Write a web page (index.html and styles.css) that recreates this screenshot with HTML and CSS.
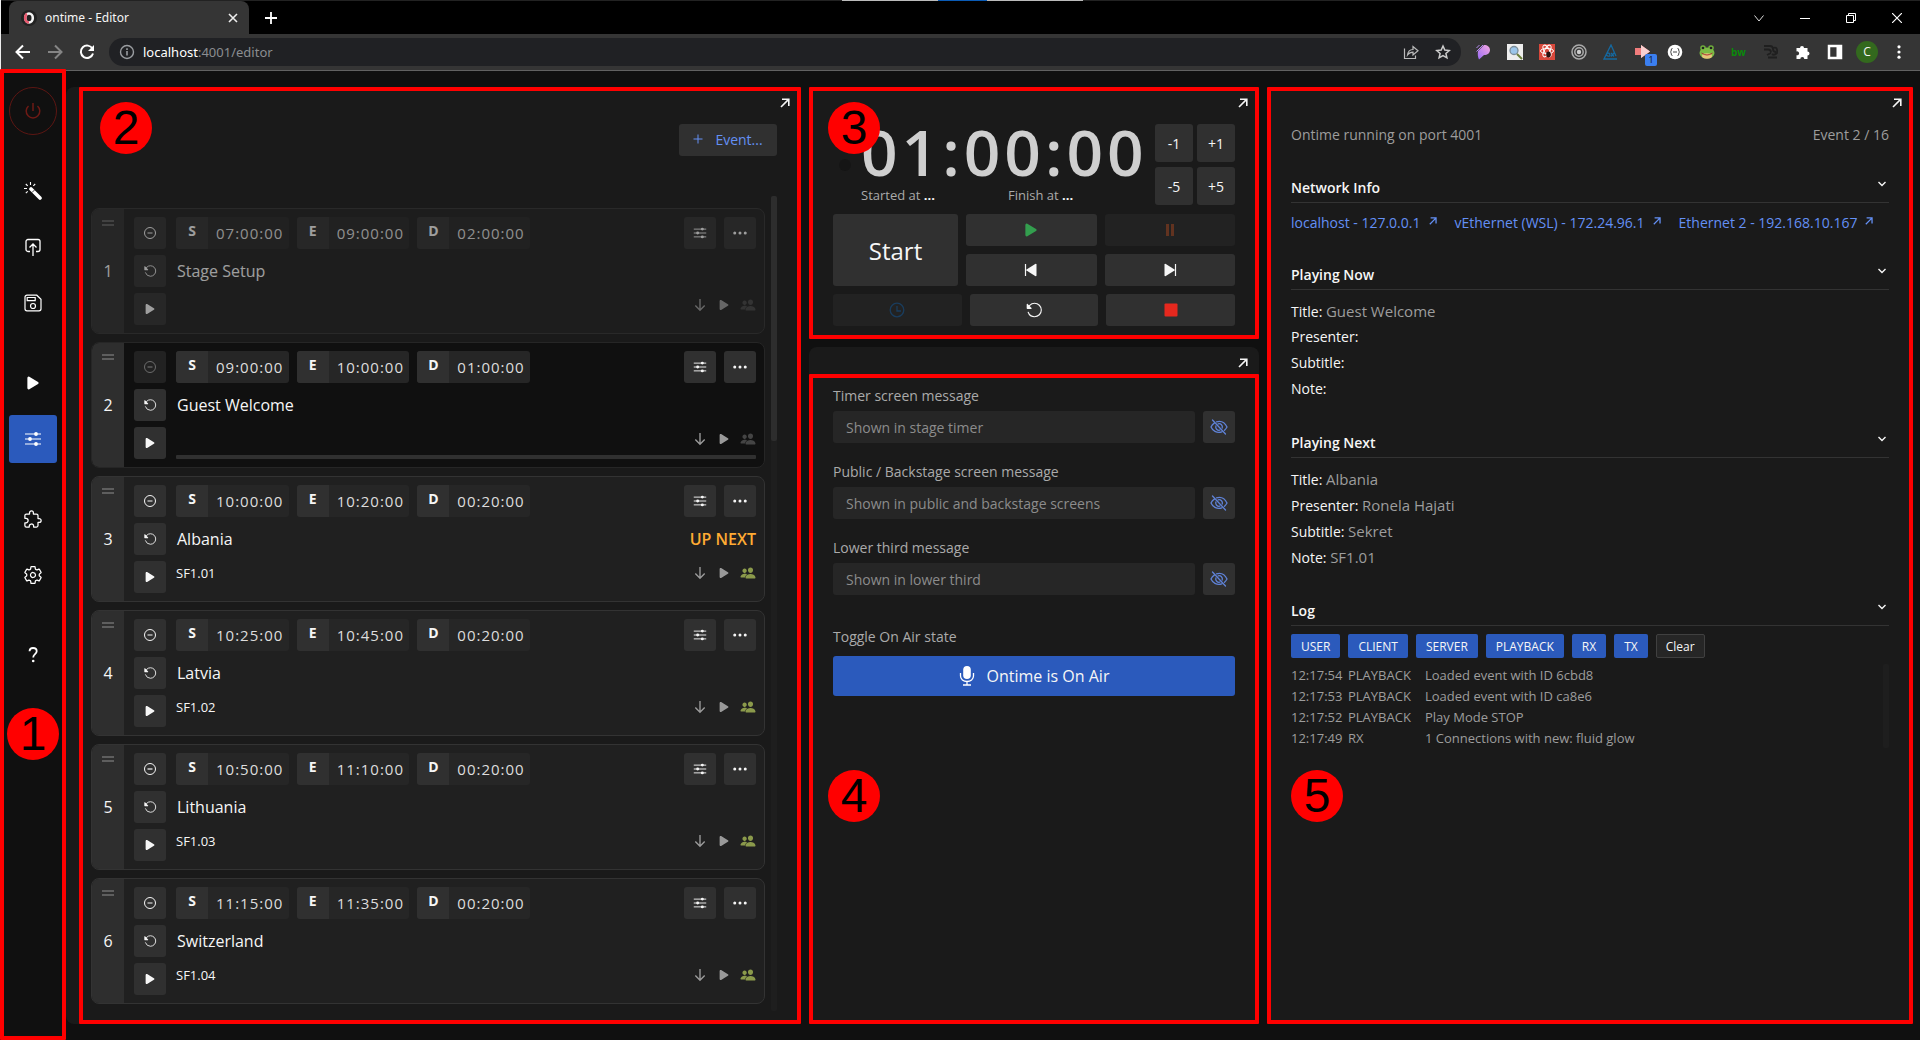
FILE: index.html
```html
<!DOCTYPE html>
<html lang="en">
<head>
<meta charset="utf-8">
<meta name="viewport" content="width=device-width, initial-scale=1">
<title>ontime - Editor</title>
<link rel="stylesheet" href="styles.css">
</head>
<body>
<svg class="sprite" aria-hidden="true">
  <symbol id="play" viewBox="0 0 512 512"><path fill="currentColor" d="M133 440a35.37 35.37 0 01-17.5-4.67c-12-6.8-19.46-20-19.46-34.33V111c0-14.37 7.46-27.53 19.46-34.33a35.13 35.13 0 0135.77.45l247.85 148.36a36 36 0 010 61l-247.89 148.4A35.5 35.5 0 01133 440z"/></symbol>
  <symbol id="reload" viewBox="0 0 512 512"><g transform="matrix(-1 0 0 1 512 0)"><path fill="none" stroke="currentColor" stroke-width="32" stroke-linecap="round" d="M400 148l-21.12-24.57A191.43 191.43 0 00240 64C134 64 48 150 48 256s86 192 192 192a192.09 192.09 0 00181.07-128"/><path fill="currentColor" d="M464 97.42V208a16 16 0 01-16 16H337.42c-14.26 0-21.46-17.23-11.38-27.31L436.69 86.04C446.77 75.96 464 83.16 464 97.42z"/></g></symbol>
  <symbol id="minus" viewBox="0 0 14 14"><circle cx="7" cy="7" r="5.5" fill="none" stroke="currentColor"/><path d="M4.5 7h5" stroke="currentColor" stroke-width="1.2"/></symbol>
  <symbol id="options" viewBox="0 0 18 18"><path d="M1 4h16M1 9h16M1 14h16" stroke="currentColor" stroke-width="1.2"/><g fill="currentColor"><circle cx="12" cy="4" r="1.9"/><circle cx="6" cy="9" r="1.9"/><circle cx="12" cy="14" r="1.9"/></g></symbol>
  <symbol id="dots" viewBox="0 0 12 12"><g fill="currentColor"><circle cx="1.5" cy="6" r="1.3"/><circle cx="6" cy="6" r="1.3"/><circle cx="10.5" cy="6" r="1.3"/></g></symbol>
  <symbol id="down" viewBox="0 0 14 14"><path d="M7 1v11M2.3 7.5L7 12.2l4.700-4.700" fill="none" stroke="currentColor" stroke-width="1.400"/></symbol>
  <symbol id="people" viewBox="0 0 512 512"><path fill="currentColor" d="M336 256c-20.560 0-40.440-9.180-56-25.840-15.130-16.250-24.370-37.920-26-61-1.740-24.620 5.770-47.260 21.140-63.760S312 80 336 80c23.830 0 45.380 9.060 60.700 25.520 15.470 16.620 23 39.220 21.260 63.630-1.670 23.110-10.900 44.770-26 61C376.440 246.820 356.570 256 336 256zM467.830 432H204.180a27.710 27.710 0 01-22-10.670 30.220 30.220 0 01-5.260-25.790c8.420-33.810 29.280-61.850 60.320-81.080C264.790 297.400 299.860 288 336 288c36.850 0 71 9 98.710 26.050 31.110 19.130 52 47.330 60.380 81.550a30.270 30.270 0 01-5.320 25.780A27.680 27.680 0 01467.830 432zM147 260c-35.190 0-66.130-32.720-69-72.930-1.420-20.600 5-39.650 18-53.620 12.860-13.830 31-21.450 51-21.450s38 7.660 50.930 21.570c13.100 14.080 19.500 33.090 18 53.520-2.870 40.200-33.800 72.910-68.930 72.910zM212.660 291.450c-17.590-8.600-40.420-12.900-65.650-12.900-29.460 0-58.070 7.680-80.570 21.620-25.510 15.830-42.670 38.880-49.600 66.710a27.390 27.390 0 004.790 23.360A25.320 25.320 0 0041.720 400h111a8 8 0 007.870-6.570c8.590-34.690 28.760-64.720 58.120-85.700a8 8 0 00-.630-13.390z"/></symbol>
  <symbol id="expand" viewBox="0 0 10 10"><path d="M1 9L8.600 1.400M2 1.200h6.800V8" fill="none" stroke="currentColor" stroke-width="1.600"/></symbol>
  <symbol id="chevron" viewBox="0 0 10 10"><path d="M1.500 3L5 6.500 8.500 3" fill="none" stroke="currentColor" stroke-width="1.400"/></symbol>
  <symbol id="eye-off" viewBox="0 0 18 18"><g fill="none" stroke="currentColor" stroke-width="1.300" stroke-linecap="round"><path d="M2.500 2l13 14M6.500 3.800C12 2.200 15.500 5.800 17 9c-.7 1.300-1.500 2.300-2.500 3.200M11.800 13.900C6.500 15.600 2.500 12.400 1 9c.8-1.700 1.900-3 3.300-3.900M8.200 5.800A3.300 3.300 0 0112.200 10M9.800 12.200A3.300 3.300 0 015.900 8"/></g></symbol>
  <symbol id="prev" viewBox="0 0 14 14"><path d="M1.500 1v12" stroke="currentColor" stroke-width="1.200"/><path fill="currentColor" d="M12.500 1.500v11q-.2 1-1.300.6L2.500 7.600q-.8-.6 0-1.200L11.200.9q1.100-.4 1.300.6z"/></symbol>
</svg>

<header class="browser">
  <div class="tabstrip">
    <div class="tab">
      <svg class="favicon" viewBox="0 0 16 16"><circle cx="8" cy="8" r="8" fill="#222"/><ellipse cx="8" cy="8" rx="3.800" ry="4.500" fill="none" stroke="#f4f4f4" stroke-width="2.600"/><path d="M8 12.500C5.500 12.500 4.200 10.500 4.200 8S5 4.500 6 4" fill="none" stroke="#e8596f" stroke-width="2.600"/></svg>
      <span class="tab-title">ontime - Editor</span>
      <button class="plain" aria-label="Close tab"><svg width="10" height="10" viewBox="0 0 10 10"><path d="M1 1l8 8M9 1L1 9" stroke="#eee" stroke-width="1.600"/></svg></button>
    </div>
    <button class="plain new-tab" aria-label="New tab"><svg width="12" height="12" viewBox="0 0 12 12"><path d="M6 0v12M0 6h12" stroke="#fff" stroke-width="1.800"/></svg></button>
    <div class="drop-hint"></div>
    <div class="window-controls">
      <button class="plain" aria-label="Search tabs"><svg width="10" height="10" viewBox="0 0 10 10"><path d="M.5 2.500L5 8l4.500-5.500" fill="none" stroke="#ddd"/></svg></button>
      <button class="plain" aria-label="Minimize"><svg width="10" height="10" viewBox="0 0 10 10"><path d="M0 5.500h10" stroke="#fff"/></svg></button>
      <button class="plain" aria-label="Restore"><svg width="10" height="10" viewBox="0 0 10 10"><path d="M.5 2.500h7v7h-7zM2.500 2.500v-2h7v7h-2" fill="none" stroke="#fff"/></svg></button>
      <button class="plain" aria-label="Close"><svg width="10" height="10" viewBox="0 0 10 10"><path d="M0 0l10 10M10 0L0 10" stroke="#fff" stroke-width="1.200"/></svg></button>
    </div>
  </div>
  <div class="toolbar">
    <button class="plain nav" aria-label="Back"><svg width="16" height="16" viewBox="0 0 16 16"><path d="M15 8H2M8 1.500L1.500 8 8 14.500" fill="none" stroke="#fff" stroke-width="2"/></svg></button>
    <button class="plain nav" aria-label="Forward"><svg width="16" height="16" viewBox="0 0 16 16"><path d="M1 8h13M8 1.500L14.500 8 8 14.500" fill="none" stroke="#858585" stroke-width="2"/></svg></button>
    <button class="plain nav" aria-label="Reload"><svg width="16" height="16" viewBox="0 0 16 16"><path d="M13.500 4.800A6.200 6.200 0 1014 9.500" fill="none" stroke="#fff" stroke-width="2"/><path d="M15 1v6H9z" fill="#fff"/></svg></button>
    <div class="omnibox">
      <svg width="16" height="16" viewBox="0 0 16 16"><circle cx="8" cy="8" r="6.500" fill="none" stroke="#9a9da1" stroke-width="1.400"/><path d="M8 7v4.500M8 4.300V6" stroke="#9a9da1" stroke-width="1.600"/></svg>
      <span class="url"><span class="host">localhost</span>:4001/editor</span>
      <button class="plain" aria-label="Share"><svg width="16" height="16" viewBox="0 0 16 16"><path d="M1.500 4.500v10h11v-3M4.500 11c.5-4 2.500-5.500 5.500-5.500V2.500l5 4.300-5 4.200V8.200C7.500 8.200 6 9 4.500 11z" fill="none" stroke="#bbb" stroke-width="1.200"/></svg></button>
      <button class="plain" aria-label="Bookmark"><svg width="16" height="16" viewBox="0 0 16 16"><path d="M8 2l1.800 4.100 4.400.4-3.300 2.900 1 4.400L8 11.500l-3.900 2.300 1-4.400L1.800 6.500l4.400-.4z" fill="none" stroke="#ccc" stroke-width="1.500"/></svg></button>
    </div>
    <div class="extensions">
      <svg viewBox="0 0 16 16"><defs><linearGradient id="pg" x1="1" y1="0" x2="0" y2="1"><stop offset="0" stop-color="#f7a8e0"/><stop offset="1" stop-color="#9a6cf5"/></linearGradient></defs><path d="M3 7l6-6c3.500 0 6 2 6 5s-2.500 5-6 5L4 15.500C2.800 13 2.500 10 3 7z" fill="url(#pg)"/><path d="M1.500 4l3-3M1.500 7.500L8 1" stroke="#b58cf0"/></svg>
      <svg viewBox="0 0 16 16"><path fill="#eee" d="M0 0h16v16H0z"/><circle cx="7" cy="6.500" r="4" fill="#9cc6ea" stroke="#7b8d99" stroke-width="1.300"/><path d="M10 10l5 5" stroke="#6a7f3a" stroke-width="2"/></svg>
      <svg viewBox="0 0 16 16"><path fill="#d9483b" d="M0 0h16v16H0z"/><g fill="none" stroke="#fff"><ellipse cx="8" cy="7" rx="6.500" ry="2.600"/><ellipse cx="8" cy="7" rx="6.500" ry="2.600" transform="rotate(60 8 7)"/><ellipse cx="8" cy="7" rx="6.500" ry="2.600" transform="rotate(120 8 7)"/></g><ellipse cx="9.500" cy="10.500" rx="2.300" ry="3" fill="#2a1210"/></svg>
      <svg viewBox="0 0 16 16"><g fill="none" stroke="#aaa" stroke-width="1.500"><circle cx="8" cy="8" r="7"/><circle cx="8" cy="8" r="4.200"/></g><circle cx="8" cy="8" r="2.200" fill="#ccc"/></svg>
      <svg viewBox="0 0 16 16"><path d="M14 15H1L8 1l5 11M5 12c3 1 2-3 0-3s-2 3 0 3M8 9l3 3.500M11 9l-3 3.500" fill="none" stroke="#15689f" stroke-width="1.300"/></svg>
      <span class="ext-badged"><svg viewBox="0 0 16 16"><path d="M0 4h6V1l9 6.500L6 14v-3H0z" fill="#f07c7c"/><path d="M6 1l9 6.500L6 14z" fill="#f8d0d0"/></svg><span class="ext-count">1</span></span>
      <svg viewBox="0 0 16 16"><circle cx="8" cy="8" r="7.300" fill="#fff"/><path d="M5.500 4.500q-1.500 0-1.200 1.500 0 1.500-1 2 1 .5 1 2-.3 1.500 1.200 1.500M10.500 4.500q1.500 0 1.200 1.500 0 1.500 1 2-1 .5-1 2 .3 1.500-1.200 1.500M6 8h4" fill="none" stroke="#444"/></svg>
      <svg viewBox="0 0 16 16"><circle cx="4" cy="4" r="2.800" fill="#6fae3c"/><circle cx="12" cy="4" r="2.800" fill="#6fae3c"/><ellipse cx="8" cy="9" rx="7.500" ry="5.500" fill="#7bbb44"/><ellipse cx="8" cy="12" rx="5" ry="2.800" fill="#e7c57a"/><circle cx="4" cy="4" r="1.300" fill="#222"/><circle cx="12" cy="4" r="1.300" fill="#222"/><path d="M2.500 9q5.500 4 11 0" fill="none" stroke="#a33"/></svg>
      <span class="ext-bw">bw</span>
      <svg viewBox="0 0 16 16"><path d="M1 2h6q3 0 3 3t3 3M1 5.500h4q3 0 3 3M4 11l4-2M5 13.500h9M10 4q5-2 4 5-3 3-5 1" fill="none" stroke="#1f1f1f" stroke-width="1.800"/></svg>
      <svg viewBox="0 0 16 16"><path d="M1.500 4H5a2 2 0 114 0h3.500v3.500a2 2 0 110 4V15H9.300a2 2 0 10-4 0H1.500v-3.800a2 2 0 100-3.800z" fill="#fff"/></svg>
      <svg viewBox="0 0 16 16"><path d="M2 2h12v12H2z" fill="none" stroke="#fff" stroke-width="2.500"/><path d="M9.500 2H14v12H9.500z" fill="#fff"/></svg>
      <span class="avatar">C</span>
      <svg viewBox="0 0 16 16"><g fill="#fff"><circle cx="8" cy="2.800" r="1.600"/><circle cx="8" cy="8" r="1.600"/><circle cx="8" cy="13.200" r="1.600"/></g></svg>
    </div>
  </div>
</header>

<div class="app">
  <nav class="sidebar">
    <div class="frame frame-nav"></div>
    <button class="side-btn power" aria-label="Quit"><svg width="18" height="18" viewBox="0 0 18 18"><path d="M9 1v8M4.500 4A6.800 6.800 0 1013.500 4" fill="none" stroke="currentColor" stroke-width="1.500"/></svg></button>
    <div class="side-group">
      <button class="side-btn" aria-label="Quick start"><svg width="18" height="18" viewBox="0 0 18 18"><path d="M7 7l9 9" stroke="#fff" stroke-width="3.600" stroke-linecap="round"/><path d="M8 10.500L10.500 8" stroke="#111" stroke-width=".8"/><path d="M6.500 0v3M1.800 2l1.900 1.900M0 6.500h3M1.800 11.200l1.900-1.900M11.200 2L9.300 3.900" stroke="#fff" stroke-width="1.100"/></svg></button>
      <button class="side-btn" aria-label="Import"><svg width="18" height="18" viewBox="0 0 18 18"><path d="M6 13.500H4a2 2 0 01-2-2v-8a2 2 0 012-2h10a2 2 0 012 2v8a2 2 0 01-2 2h-2M9 18V6.500M5.500 9.500L9 6l3.500 3.500" fill="none" stroke="#fff" stroke-width="1.300"/></svg></button>
      <button class="side-btn" aria-label="Save"><svg width="18" height="18" viewBox="0 0 18 18"><path d="M12.800 1.200H3a2 2 0 00-2 2v11.600a2 2 0 002 2h12a2 2 0 002-2V5.200zM3.200 3.500h8v3.200h-8z" fill="none" stroke="#fff" stroke-width="1.200"/><circle cx="9" cy="12" r="2.500" fill="none" stroke="#fff" stroke-width="1.200"/></svg></button>
    </div>
    <div class="side-group">
      <button class="side-btn" aria-label="Run mode"><svg width="18" height="18"><use href="#play"/></svg></button>
      <button class="side-btn active" aria-label="Edit mode"><svg width="18" height="18"><use href="#options"/></svg></button>
    </div>
    <div class="side-group">
      <button class="side-btn" aria-label="Integrations"><svg width="20" height="20" viewBox="0 0 512 512"><path fill="none" stroke="#fff" stroke-width="32" d="M413.660 246.100H386a2 2 0 01-2-2v-77.240A38.860 38.860 0 00345.140 128H267.900a2 2 0 01-2-2V98.340c0-27.140-21.500-49.860-48.640-50.330a49.530 49.530 0 00-50.400 49.510V126a2 2 0 01-2 2H87.620A39.740 39.740 0 0048 167.620V238a2 2 0 002 2h26.910c29.370 0 53.680 25.480 54.090 54.850.42 29.870-23.510 57.150-53.290 57.150H50a2 2 0 00-2 2v70.380A39.740 39.740 0 0087.620 464H158a2 2 0 002-2v-20.930c0-30.280 24.750-56.350 55-57.060 30.100-.7 57 20.310 57 50.280V462a2 2 0 002 2h71.140A38.860 38.860 0 00384 425.140v-78a2 2 0 012-2h28.480c27.630 0 49.520-22.670 49.520-50.400s-23.200-48.640-50.340-48.640z"/></svg></button>
      <button class="side-btn" aria-label="Settings"><svg width="20" height="20" viewBox="0 0 512 512"><path fill="none" stroke="#fff" stroke-width="32" stroke-linejoin="round" d="M262.290 192.310a64 64 0 1057.400 57.400 64.130 64.130 0 00-57.400-57.400zM416.390 256a154.340 154.340 0 01-1.530 20.790l45.210 35.460a10.810 10.810 0 012.450 13.750l-42.770 74a10.810 10.810 0 01-13.140 4.590l-44.900-18.080a16.110 16.110 0 00-15.170 1.750A164.480 164.480 0 01325 400.800a15.940 15.940 0 00-8.820 12.140l-6.730 47.890a11.080 11.080 0 01-10.680 9.170h-85.540a11.110 11.110 0 01-10.690-8.870l-6.720-47.820a16.070 16.070 0 00-9-12.220 155.300 155.300 0 01-21.460-12.570 16 16 0 00-15.110-1.710l-44.890 18.070a10.810 10.810 0 01-13.140-4.580l-42.770-74a10.800 10.800 0 012.450-13.750l38.210-30a16.050 16.050 0 006-14.080c-.36-4.170-.58-8.330-.58-12.500s.21-8.270.58-12.350a16 16 0 00-6.070-13.940l-38.190-30A10.810 10.810 0 0149.480 186l42.770-74a10.810 10.810 0 0113.140-4.590l44.900 18.080a16.110 16.110 0 0015.170-1.750A164.480 164.480 0 01187 111.200a15.940 15.940 0 008.820-12.140l6.730-47.890A11.080 11.080 0 01213.230 42h85.540a11.110 11.110 0 0110.690 8.870l6.720 47.820a16.070 16.070 0 009 12.220 155.300 155.300 0 0121.460 12.570 16 16 0 0015.110 1.710l44.890-18.070a10.810 10.810 0 0113.140 4.580l42.770 74a10.800 10.800 0 01-2.450 13.750l-38.210 30a16.050 16.050 0 00-6.050 14.080c.33 4.140.55 8.300.55 12.470z"/></svg></button>
    </div>
    <button class="side-btn" aria-label="Help"><svg width="18" height="18" viewBox="0 0 18 18"><path d="M5.500 5.200C5.700 2.800 7.200 2 9 2c2 0 3.700 1.200 3.700 3.200 0 3-3.500 3-3.500 6.300" fill="none" stroke="#fff" stroke-width="1.800"/><circle cx="9.200" cy="15" r="1.300" fill="#fff"/></svg></button>
    <span class="marker marker-1">1</span>
  </nav>

  <main class="panels">
    <section class="panel rundown">
      <div class="frame frame-rundown"></div>
      <button class="plain expand" aria-label="Open rundown"><svg width="10" height="10"><use href="#expand"/></svg></button>
      <span class="marker marker-top">2</span>
      <div class="rundown-bar"><button class="btn add-event"><svg width="10" height="10" viewBox="0 0 10 10"><path d="M5 .5v9M.5 5h9" stroke="currentColor"/></svg>Event...</button></div>
      <div class="list-wrap">
        <ol class="events">
          <li class="event past">
            <div class="grip"><span class="handle"></span>1</div>
            <div class="actions"><button class="btn icon" aria-label="Skip"><svg><use href="#minus"/></svg></button><button class="btn icon" aria-label="Reload"><svg><use href="#reload"/></svg></button><button class="btn icon" aria-label="Play"><svg><use href="#play"/></svg></button></div>
            <div class="event-body">
              <div class="event-top"><div class="times"><label class="time"><b>S</b><input value="07:00:00"></label><label class="time"><b>E</b><input value="09:00:00"></label><label class="time"><b>D</b><input value="02:00:00"></label></div><button class="btn icon" aria-label="Options"><svg><use href="#options"/></svg></button><button class="btn icon" aria-label="More"><svg><use href="#dots"/></svg></button></div>
              <div class="event-title"><span>Stage Setup</span></div>
              <div class="event-foot"><span class="note"></span><svg><use href="#down"/></svg><svg><use href="#play"/></svg><svg class="people"><use href="#people"/></svg></div>
            </div>
          </li>
          <li class="event current">
            <div class="grip"><span class="handle"></span>2</div>
            <div class="actions"><button class="btn icon" aria-label="Skip" disabled><svg><use href="#minus"/></svg></button><button class="btn icon" aria-label="Reload"><svg><use href="#reload"/></svg></button><button class="btn icon" aria-label="Play"><svg><use href="#play"/></svg></button></div>
            <div class="event-body">
              <div class="event-top"><div class="times"><label class="time"><b>S</b><input value="09:00:00"></label><label class="time"><b>E</b><input value="10:00:00"></label><label class="time"><b>D</b><input value="01:00:00"></label></div><button class="btn icon" aria-label="Options"><svg><use href="#options"/></svg></button><button class="btn icon" aria-label="More"><svg><use href="#dots"/></svg></button></div>
              <div class="event-title"><span>Guest Welcome</span></div>
              <div class="event-foot"><span class="note"></span><svg><use href="#down"/></svg><svg><use href="#play"/></svg><svg class="people"><use href="#people"/></svg></div>
              <div class="progress"></div>
            </div>
          </li>
          <li class="event public">
            <div class="grip"><span class="handle"></span>3</div>
            <div class="actions"><button class="btn icon" aria-label="Skip"><svg><use href="#minus"/></svg></button><button class="btn icon" aria-label="Reload"><svg><use href="#reload"/></svg></button><button class="btn icon" aria-label="Play"><svg><use href="#play"/></svg></button></div>
            <div class="event-body">
              <div class="event-top"><div class="times"><label class="time"><b>S</b><input value="10:00:00"></label><label class="time"><b>E</b><input value="10:20:00"></label><label class="time"><b>D</b><input value="00:20:00"></label></div><button class="btn icon" aria-label="Options"><svg><use href="#options"/></svg></button><button class="btn icon" aria-label="More"><svg><use href="#dots"/></svg></button></div>
              <div class="event-title"><span>Albania</span><span class="up-next">UP NEXT</span></div>
              <div class="event-foot"><span class="note">SF1.01</span><svg><use href="#down"/></svg><svg><use href="#play"/></svg><svg class="people"><use href="#people"/></svg></div>
            </div>
          </li>
          <li class="event public">
            <div class="grip"><span class="handle"></span>4</div>
            <div class="actions"><button class="btn icon" aria-label="Skip"><svg><use href="#minus"/></svg></button><button class="btn icon" aria-label="Reload"><svg><use href="#reload"/></svg></button><button class="btn icon" aria-label="Play"><svg><use href="#play"/></svg></button></div>
            <div class="event-body">
              <div class="event-top"><div class="times"><label class="time"><b>S</b><input value="10:25:00"></label><label class="time"><b>E</b><input value="10:45:00"></label><label class="time"><b>D</b><input value="00:20:00"></label></div><button class="btn icon" aria-label="Options"><svg><use href="#options"/></svg></button><button class="btn icon" aria-label="More"><svg><use href="#dots"/></svg></button></div>
              <div class="event-title"><span>Latvia</span></div>
              <div class="event-foot"><span class="note">SF1.02</span><svg><use href="#down"/></svg><svg><use href="#play"/></svg><svg class="people"><use href="#people"/></svg></div>
            </div>
          </li>
          <li class="event public">
            <div class="grip"><span class="handle"></span>5</div>
            <div class="actions"><button class="btn icon" aria-label="Skip"><svg><use href="#minus"/></svg></button><button class="btn icon" aria-label="Reload"><svg><use href="#reload"/></svg></button><button class="btn icon" aria-label="Play"><svg><use href="#play"/></svg></button></div>
            <div class="event-body">
              <div class="event-top"><div class="times"><label class="time"><b>S</b><input value="10:50:00"></label><label class="time"><b>E</b><input value="11:10:00"></label><label class="time"><b>D</b><input value="00:20:00"></label></div><button class="btn icon" aria-label="Options"><svg><use href="#options"/></svg></button><button class="btn icon" aria-label="More"><svg><use href="#dots"/></svg></button></div>
              <div class="event-title"><span>Lithuania</span></div>
              <div class="event-foot"><span class="note">SF1.03</span><svg><use href="#down"/></svg><svg><use href="#play"/></svg><svg class="people"><use href="#people"/></svg></div>
            </div>
          </li>
          <li class="event public">
            <div class="grip"><span class="handle"></span>6</div>
            <div class="actions"><button class="btn icon" aria-label="Skip"><svg><use href="#minus"/></svg></button><button class="btn icon" aria-label="Reload"><svg><use href="#reload"/></svg></button><button class="btn icon" aria-label="Play"><svg><use href="#play"/></svg></button></div>
            <div class="event-body">
              <div class="event-top"><div class="times"><label class="time"><b>S</b><input value="11:15:00"></label><label class="time"><b>E</b><input value="11:35:00"></label><label class="time"><b>D</b><input value="00:20:00"></label></div><button class="btn icon" aria-label="Options"><svg><use href="#options"/></svg></button><button class="btn icon" aria-label="More"><svg><use href="#dots"/></svg></button></div>
              <div class="event-title"><span>Switzerland</span></div>
              <div class="event-foot"><span class="note">SF1.04</span><svg><use href="#down"/></svg><svg><use href="#play"/></svg><svg class="people"><use href="#people"/></svg></div>
            </div>
          </li>
        </ol>
        <div class="scroll-track"><div class="scroll-thumb"></div></div>
      </div>
    </section>

    <div class="middle">
      <section class="panel playback">
        <div class="frame"></div>
        <button class="plain expand" aria-label="Open playback"><svg width="10" height="10"><use href="#expand"/></svg></button>
        <div class="timer-row">
          <span class="roll-dot"></span>
          <div class="timer">
            <div class="clock">01:00:00</div>
            <div class="clock-info"><span>Started at <b>...</b></span><span>Finish at <b>...</b></span></div>
          </div>
          <div class="nudge"><button class="btn">-1</button><button class="btn">+1</button><button class="btn">-5</button><button class="btn">+5</button></div>
        </div>
        <div class="transport">
          <button class="btn start">Start</button>
          <button class="btn go" aria-label="Play"><svg width="18" height="18"><use href="#play"/></svg></button>
          <button class="btn pause" aria-label="Pause" disabled><svg width="14" height="14" viewBox="0 0 14 14"><path d="M3 1h3v12H3zM8 1h3v12H8z" fill="#d9541e"/></svg></button>
          <button class="btn" aria-label="Previous"><svg width="14" height="14"><use href="#prev"/></svg></button>
          <button class="btn" aria-label="Next"><svg class="flip" width="14" height="14"><use href="#prev"/></svg></button>
        </div>
        <div class="transport-alt">
          <button class="btn" aria-label="Roll" disabled><svg width="16" height="16" viewBox="0 0 16 16"><path d="M8 4v5h4" fill="none" stroke="#0a6ecb" stroke-width="1.300"/><circle cx="8" cy="8" r="6.800" fill="none" stroke="#0a6ecb" stroke-width="1.300"/></svg></button>
          <button class="btn" aria-label="Reload"><svg width="18" height="18"><use href="#reload"/></svg></button>
          <button class="btn" aria-label="Stop"><svg width="14" height="14" viewBox="0 0 14 14"><rect x=".5" y=".5" width="13" height="13" rx="1" fill="#e6281e"/></svg></button>
        </div>
        <span class="marker marker-top">3</span>
      </section>

      <section class="panel messages">
        <div class="frame frame-messages"></div>
        <button class="plain expand" aria-label="Open messages"><svg width="10" height="10"><use href="#expand"/></svg></button>
        <div class="field"><label for="m1">Timer screen message</label><div class="field-row"><input id="m1" placeholder="Shown in stage timer"><button class="btn eye" aria-label="Show timer message"><svg width="18" height="18"><use href="#eye-off"/></svg></button></div></div>
        <div class="field"><label for="m2">Public / Backstage screen message</label><div class="field-row"><input id="m2" placeholder="Shown in public and backstage screens"><button class="btn eye" aria-label="Show public message"><svg width="18" height="18"><use href="#eye-off"/></svg></button></div></div>
        <div class="field"><label for="m3">Lower third message</label><div class="field-row"><input id="m3" placeholder="Shown in lower third"><button class="btn eye" aria-label="Show lower third"><svg width="18" height="18"><use href="#eye-off"/></svg></button></div></div>
        <div class="field on-air"><label for="onair">Toggle On Air state</label><button id="onair" class="btn air"><svg width="16" height="20" viewBox="0 0 16 20"><rect x="4.200" y="0" width="7.600" height="13" rx="3.800" fill="#fff"/><path d="M1.500 7v3a6.500 5.500 0 0013 0V7M8 15.500V19M4 19h8" fill="none" stroke="#fff" stroke-width="1.300"/></svg>Ontime is On Air</button></div>
        <span class="marker marker-low">4</span>
      </section>
    </div>

    <section class="panel info">
      <div class="frame"></div>
      <button class="plain expand" aria-label="Open info"><svg width="10" height="10"><use href="#expand"/></svg></button>
      <div class="status"><span>Ontime running on port 4001</span><span>Event 2 / 16</span></div>
      <section class="block">
        <h2>Network Info<svg><use href="#chevron"/></svg></h2>
        <div class="links"><a href="#local">localhost - 127.0.0.1<svg><use href="#expand"/></svg></a><a href="#wsl">vEthernet (WSL) - 172.24.96.1<svg><use href="#expand"/></svg></a><a href="#eth">Ethernet 2 - 192.168.10.167<svg><use href="#expand"/></svg></a></div>
      </section>
      <section class="block">
        <h2>Playing Now<svg><use href="#chevron"/></svg></h2>
        <dl><div><dt>Title:</dt> <dd>Guest Welcome</dd></div><div><dt>Presenter:</dt></div><div><dt>Subtitle:</dt></div><div><dt>Note:</dt></div></dl>
      </section>
      <section class="block">
        <h2>Playing Next<svg><use href="#chevron"/></svg></h2>
        <dl><div><dt>Title:</dt> <dd>Albania</dd></div><div><dt>Presenter:</dt> <dd>Ronela Hajati</dd></div><div><dt>Subtitle:</dt> <dd>Sekret</dd></div><div><dt>Note:</dt> <dd>SF1.01</dd></div></dl>
      </section>
      <section class="block">
        <h2>Log<svg><use href="#chevron"/></svg></h2>
        <div class="filters"><button>USER</button><button>CLIENT</button><button>SERVER</button><button>PLAYBACK</button><button>RX</button><button>TX</button><button class="clear">Clear</button></div>
        <div class="log-wrap">
          <table class="log">
            <tr><td>12:17:54</td><td>PLAYBACK</td><td>Loaded event with ID 6cbd8</td></tr>
            <tr><td>12:17:53</td><td>PLAYBACK</td><td>Loaded event with ID ca8e6</td></tr>
            <tr><td>12:17:52</td><td>PLAYBACK</td><td>Play Mode STOP</td></tr>
            <tr><td>12:17:49</td><td>RX</td><td>1 Connections with new: fluid glow</td></tr>
          </table>
          <div class="scroll-track"></div>
        </div>
      </section>
      <span class="marker marker-low">5</span>
    </section>
  </main>
</div>
</body>
</html>
```
FILE: styles.css
```css
* { box-sizing: border-box; }
body {
  margin: 0;
  height: 100vh;
  display: flex;
  flex-direction: column;
  overflow: hidden;
  background: #101010;
  color: #f6f6f6;
  font-family: "Open Sans", "Noto Sans", sans-serif;
  font-size: 14px;
}
button, input { font: inherit; color: inherit; border: 0; margin: 0; padding: 0; }
svg { display: block; flex: none; }
.sprite { position: absolute; width: 0; height: 0; }
.plain { background: none; display: flex; align-items: center; justify-content: center; }

/* Browser window */
.browser { flex: none; background: #353535; border-bottom: 1px solid #626262; border-left: 1px solid #eee; }
.tabstrip { position: relative; display: flex; align-items: center; height: 34px; padding-left: 8px; background: #000; border-top: 1px solid #222; }
.tab { display: flex; align-items: center; gap: 8px; width: 240px; height: 33px; padding: 0 11px 0 12px; background: #353535; border-radius: 8px 8px 0 0; font-family: "Noto Sans", sans-serif; font-size: 12px; }
.favicon { width: 16px; height: 16px; }
.tab-title { flex: 1; }
.new-tab { width: 44px; height: 32px; }
.drop-hint { position: absolute; top: -1px; left: 43.8%; width: 241px; height: 1px; background: linear-gradient(90deg, #bbb 40%, #0a5bb5 40% 60%, #bbb 60%); }
.window-controls { display: flex; margin-left: auto; height: 27px; }
.window-controls .plain { width: 46px; }
.toolbar { display: flex; align-items: center; height: 36px; padding-left: 6px; }
.nav { width: 32px; height: 32px; }
.omnibox { flex: 1; display: flex; align-items: center; gap: 8px; height: 28px; margin-left: 6px; padding: 0 6px 0 10px; border-radius: 14px; background: #202124; font-family: "Noto Sans", sans-serif; font-size: 13px; }
.omnibox .plain { width: 24px; }
.url { flex: 1; color: #8b8d90; }
.host { color: #fff; }
.extensions { display: flex; align-items: center; gap: 16px; padding: 0 13px 0 14px; }
.extensions > svg, .ext-badged, .ext-badged svg { width: 16px; height: 16px; }
.ext-badged { position: relative; }
.ext-count { position: absolute; left: 10px; top: 10px; width: 12px; height: 12px; border-radius: 2px; background: #3b7ff0; color: #111; font-size: 9px; line-height: 12px; text-align: center; }
.ext-bw { width: 16px; color: #0a8a0a; font-size: 10px; font-weight: 700; line-height: 16px; }
.avatar { width: 22px; height: 22px; margin: 0 -3px; border-radius: 50%; background: #33691e; font-size: 12px; line-height: 22px; text-align: center; }

/* Application shell */
.app { flex: 1; min-height: 0; display: flex; }
.sidebar { position: relative; flex: none; display: flex; flex-direction: column; align-items: center; gap: 32px; width: 66px; padding-top: 16px; }
.side-group { display: flex; flex-direction: column; gap: 8px; }
.side-btn { display: flex; align-items: center; justify-content: center; width: 48px; height: 48px; border-radius: 3px; background: none; color: #fff; }
.side-btn.active { background: #2b5abc; }
.side-btn.power { border: 1px solid #5c1613; border-radius: 50%; color: #6e1a15; }
.panels { flex: 1; min-width: 0; display: grid; grid-template-columns: 735fr 450fr 646fr; grid-template-rows: minmax(0, 1fr); gap: 8px; padding: 16px 7px 16px 0; }
.panel { position: relative; min-width: 0; padding: 37px 24px 13px; border-radius: 8px; background: #1a1a1a; }
.middle { display: flex; flex-direction: column; gap: 8px; min-width: 0; }
.expand { position: absolute; top: 11px; right: 11px; }

/* Annotations */
.frame { position: absolute; inset: 0; border: 4px solid #f00; border-radius: 1px; pointer-events: none; }
.frame-nav { top: -2px; }
.frame-rundown { left: 13px; }
.frame-messages { top: 27px; }
.marker { position: absolute; width: 52px; height: 52px; border-radius: 50%; background: #f00; color: #000; font-family: "Liberation Sans", Arial, sans-serif; font-size: 48px; line-height: 52px; text-align: center; }
.marker-1 { top: 637px; left: 7px; }
.marker-top { top: 15px; left: 19px; }
.rundown .marker-top { left: 34px; }
.marker-low { top: 423px; left: 19px; }
.info .marker-low { top: 683px; left: 24px; }

/* Buttons */
.btn { display: flex; align-items: center; justify-content: center; height: 32px; border-radius: 3px; background: #303030; color: #f6f6f6; }
.btn:disabled { background: #222; }
.btn:disabled svg { opacity: .35; }
.icon { width: 32px; flex: none; }
.icon svg { width: 14px; height: 14px; }

/* Rundown */
.rundown { display: flex; flex-direction: column; padding-left: 25px; }
.rundown-bar { display: flex; justify-content: flex-end; margin-bottom: 40px; }
.add-event { gap: 12px; width: 98px; padding-bottom: 2px; color: #6490f5; }
.list-wrap { flex: 1; min-height: 0; display: flex; gap: 6px; }
.events { flex: 1; min-width: 0; display: flex; flex-direction: column; gap: 8px; margin: 0; padding: 12px 0 0; overflow: hidden; list-style: none; }
.scroll-track { flex: none; width: 6px; border-radius: 2px; background: #1e1e1e; }
.scroll-thumb { height: 30%; border-radius: 2px; background: #2d2d2d; }
.event { flex: none; display: flex; gap: 10px; height: 126px; padding-right: 8px; border: 1px solid #333; border-radius: 8px; background: #202020; overflow: hidden; }
.event.past { opacity: .6; }
.event.current { background: #101010; border-color: #262626; }
.grip { position: relative; display: flex; align-items: center; justify-content: center; width: 32px; background: #2e2e2e; font-size: 16px; }
.handle { position: absolute; top: 11px; left: 10px; width: 12px; height: 6px; border: solid #5e5e5e; border-width: 2px 0; }
.actions { display: flex; flex-direction: column; gap: 6px; padding-top: 8px; }
.event-body { flex: 1; min-width: 0; padding-top: 8px; }
.event-top { display: flex; gap: 8px; }
.times { display: grid; grid-template-columns: repeat(3, 1fr); gap: 8px; width: 354px; margin-right: auto; }
.time { display: flex; min-width: 0; height: 32px; border-radius: 3px; background: #262626; overflow: hidden; }
.time b { flex: none; width: 32px; background: #303030; font-weight: 700; line-height: 28px; text-align: center; }
.time input { flex: 1; min-width: 0; padding-left: 8px; background: none; color: #ddd; font-size: 15px; letter-spacing: 1px; }
.event-title { display: flex; justify-content: space-between; padding: 10px 0 0 1px; font-size: 16px; line-height: 24px; }
.up-next { color: #ffab33; font-weight: 600; }
.event-foot { display: flex; align-items: center; gap: 10px; height: 24px; margin-top: 10px; color: #999; }
.event-foot svg { width: 14px; height: 14px; }
.event-foot .people { width: 16px; height: 16px; margin-left: -1px; color: #444; }
.public .people { color: #8b9a4b; }
.note { flex: 1; color: #f6f6f6; font-size: 13px; line-height: 24px; }
.progress { height: 4px; margin-top: 4px; background: #303030; border-radius: 1px; }

/* Playback */
.timer-row { display: flex; padding-left: 28px; height: 81px; margin-bottom: 9px; }
.roll-dot { position: absolute; top: 72px; left: 30px; width: 12px; height: 12px; border-radius: 50%; background: #151515; }
.timer { flex: 1; min-width: 0; }
.clock { height: 63px; color: #cfcfcf; font-size: 64px; font-weight: 600; line-height: 56px; letter-spacing: 4px; white-space: nowrap; }
.clock-info { display: grid; grid-template-columns: 1fr 1fr; color: #aaa; font-size: 13px; line-height: 16px; }
.clock-info b { color: #f6f6f6; }
.nudge { display: grid; grid-template-columns: 38px 38px; gap: 5px 4px; }
.nudge .btn { height: 38px; }
.transport { display: grid; grid-template-columns: 125px 1fr 1fr; gap: 8px; margin-bottom: 8px; }
.start { grid-row: span 2; height: 72px; font-size: 24px; }
.go { color: #339e4e; }
.flip { transform: scaleX(-1); }
.transport-alt { display: grid; grid-template-columns: repeat(3, 1fr); gap: 8px; }

/* Messages */
.messages { flex: 1; }
.field { margin-bottom: 17px; }
.field label { display: block; height: 27px; padding-top: 4px; line-height: 16px; color: #aaa; }
.field-row { display: flex; gap: 8px; }
.field-row input { flex: 1; min-width: 0; height: 32px; padding: 0 13px; border-radius: 3px; background: #262626; }
.field-row input::placeholder { color: #8c8c8c; }
.eye { width: 32px; color: #5f82d6; }
.on-air { padding-top: 13px; }
.on-air label { height: 31px; }
.air { width: 100%; height: 40px; gap: 12px; padding-bottom: 1px; background: #2b5abc; font-size: 16px; font-weight: 500; }

/* Info */
.status { display: flex; justify-content: space-between; color: #9d9d9d; line-height: 22px; margin-bottom: 32px; }
.block { margin-bottom: 31px; }
.block h2 { display: flex; justify-content: space-between; margin: 0 0 8px; height: 25px; border-bottom: 1px solid #333; font-size: 14px; font-weight: 600; line-height: 20px; }
.block h2 svg { width: 10px; height: 10px; margin: 1px 2px 0; }
.links { display: flex; flex-wrap: wrap; gap: 18px; line-height: 23px; }
.links a { display: flex; gap: 8px; color: #6490f5; text-decoration: none; }
.links svg { width: 8px; height: 8px; margin-top: 6px; }
dl { margin: 0; }
dl div { height: 26px; line-height: 26px; }
dt, dd { display: inline; margin: 0; }
dd { color: #9d9d9d; font-size: 15px; }
.filters { display: flex; gap: 8px; margin-bottom: 6px; }
.filters button { height: 24px; padding: 0 10px; border-radius: 2px; background: #2b5abc; font-size: 12px; }
.filters .clear { padding: 0 9px; border: 1px solid #404040; background: #262626; }
.log-wrap { display: flex; }
.log { flex: 1; border-collapse: collapse; color: #9d9d9d; font-size: 13px; }
.log td { height: 21px; padding: 0; line-height: 20px; }
.log td:nth-child(1) { width: 57px; }
.log td:nth-child(2) { width: 77px; }
```
